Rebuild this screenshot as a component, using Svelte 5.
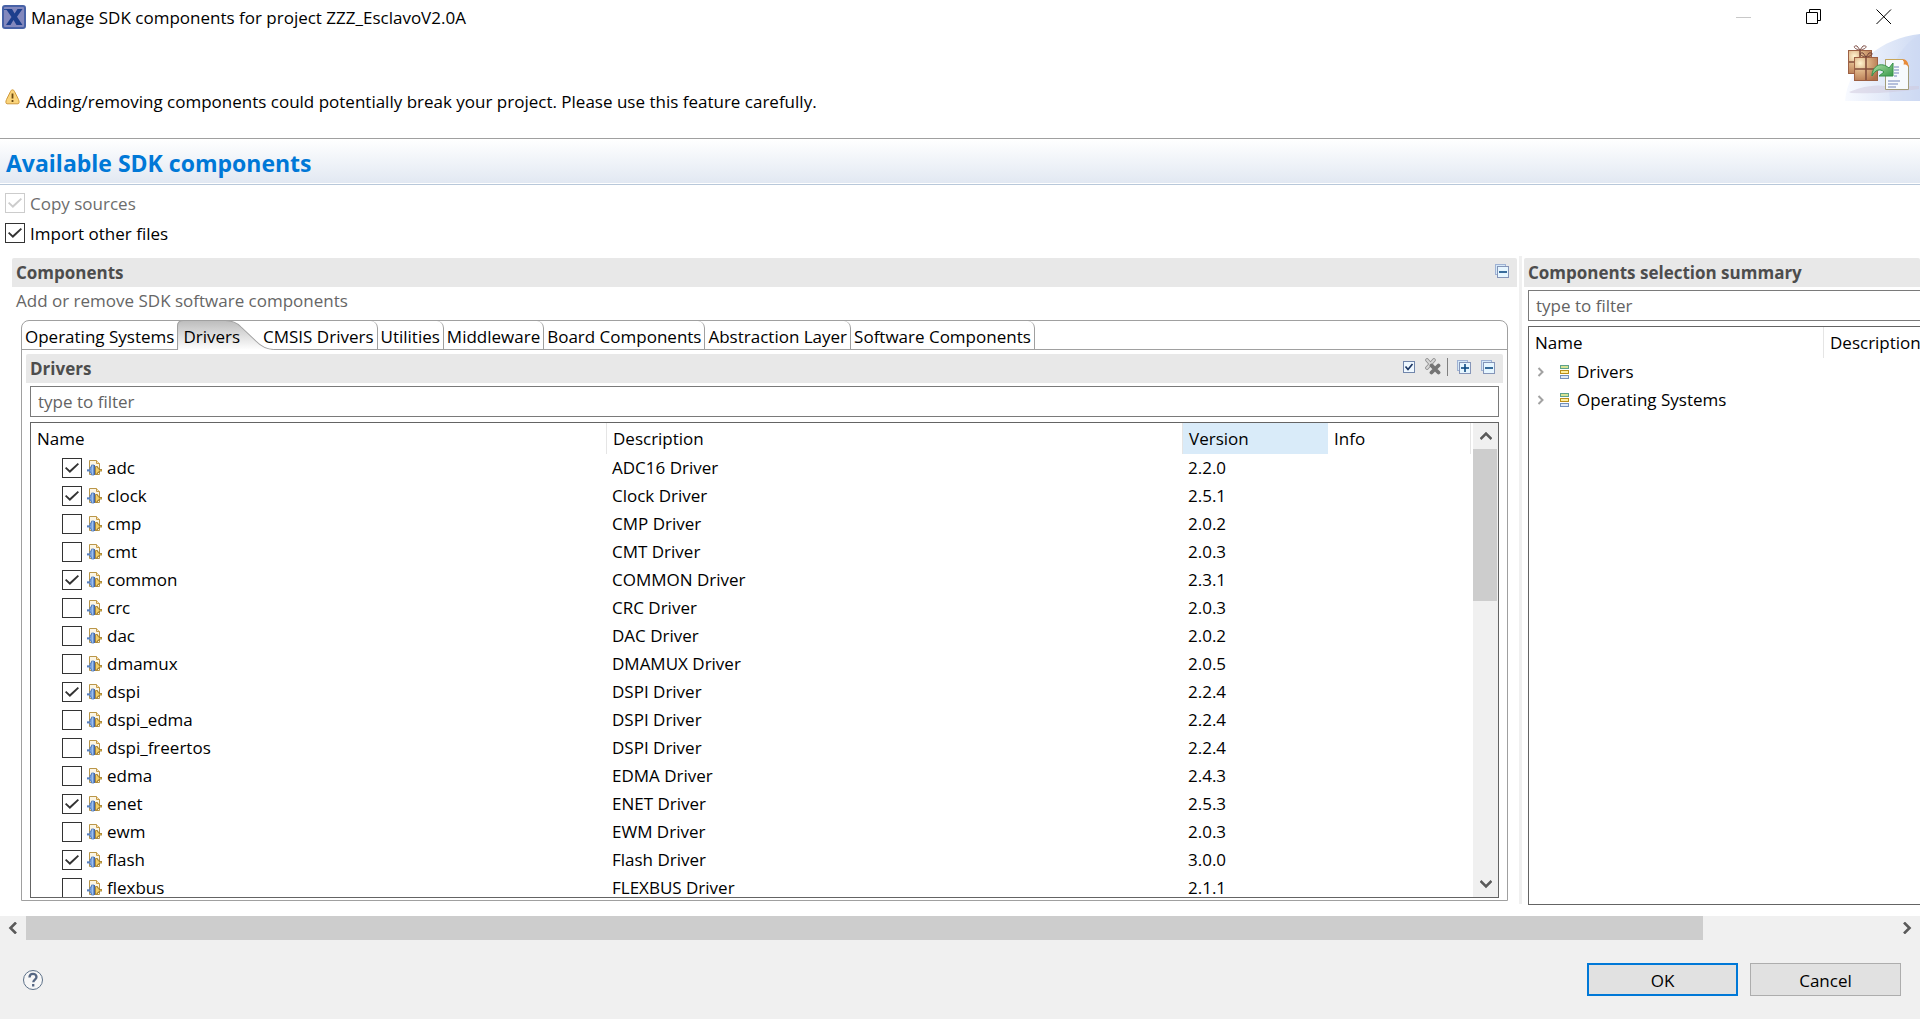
<script>
  const tabs = [
    'Operating Systems',
    'Drivers',
    'CMSIS Drivers',
    'Utilities',
    'Middleware',
    'Board Components',
    'Abstraction Layer',
    'Software Components'
  ];
  let active = $state('Drivers');

  let drivers = $state([
    { name: 'adc', description: 'ADC16 Driver', version: '2.2.0', checked: true },
    { name: 'clock', description: 'Clock Driver', version: '2.5.1', checked: true },
    { name: 'cmp', description: 'CMP Driver', version: '2.0.2', checked: false },
    { name: 'cmt', description: 'CMT Driver', version: '2.0.3', checked: false },
    { name: 'common', description: 'COMMON Driver', version: '2.3.1', checked: true },
    { name: 'crc', description: 'CRC Driver', version: '2.0.3', checked: false },
    { name: 'dac', description: 'DAC Driver', version: '2.0.2', checked: false },
    { name: 'dmamux', description: 'DMAMUX Driver', version: '2.0.5', checked: false },
    { name: 'dspi', description: 'DSPI Driver', version: '2.2.4', checked: true },
    { name: 'dspi_edma', description: 'DSPI Driver', version: '2.2.4', checked: false },
    { name: 'dspi_freertos', description: 'DSPI Driver', version: '2.2.4', checked: false },
    { name: 'edma', description: 'EDMA Driver', version: '2.4.3', checked: false },
    { name: 'enet', description: 'ENET Driver', version: '2.5.3', checked: true },
    { name: 'ewm', description: 'EWM Driver', version: '2.0.3', checked: false },
    { name: 'flash', description: 'Flash Driver', version: '3.0.0', checked: true },
    { name: 'flexbus', description: 'FLEXBUS Driver', version: '2.1.1', checked: false }
  ]);

  const summary = ['Drivers', 'Operating Systems'];
</script>

{#snippet foldIcon(plus)}
  <svg width="14" height="14" viewBox="0 0 14 14" aria-hidden="true">
    <rect x="0.5" y="0.5" width="10" height="10" fill="#d5e9f8" stroke="#9fb2d4" />
    <rect x="2.5" y="2.5" width="11" height="11" fill="#e6f6ff" stroke="#8595b8" />
    <path d="M4 8h8" stroke="#0c4a82" stroke-width="1.6" />
    {#if plus}<path d="M8 4v8" stroke="#0c4a82" stroke-width="1.6" />{/if}
  </svg>
{/snippet}

{#snippet chevron(dir)}
  <svg class={dir} width="12" height="12" viewBox="0 0 12 12" aria-hidden="true">
    <path d="M3 0.5 8.5 6 3 11.5" fill="none" stroke="#5a5a5a" stroke-width="2.6" />
  </svg>
{/snippet}

<div class="dialog">
  <header class="titlebar">
    <svg width="24" height="24" viewBox="0 0 24 24" aria-hidden="true">
      <rect x="1" y="1" width="22" height="22" rx="2" fill="#8388bd" stroke="#4761a6" stroke-width="2" />
      <path d="M2 4.5h5" stroke="#27509a" />
      <path d="M4 4h6l2.600 4.500L15.500 4h5l-5.500 7.800L20.500 20h-6l-3-5-3 5H4l5.500-8z" fill="#1d3f8d" />
    </svg>
    <h1>Manage SDK components for project ZZZ_EsclavoV2.0A</h1>
    <div class="window-buttons">
      <button aria-label="Minimize" disabled>
        <svg width="16" height="16" viewBox="0 0 16 16"><path d="M0 8.500h15" stroke="#c8c8c8" /></svg>
      </button>
      <button aria-label="Restore">
        <svg width="16" height="16" viewBox="0 0 16 16"><path d="M3.500 3.500v-3h11v11h-3M0.500 3.500h11v11h-11z" fill="none" stroke="#000" /></svg>
      </button>
      <button aria-label="Close">
        <svg width="16" height="16" viewBox="0 0 16 16"><path d="M0.500 0.500l14.500 14.500M15 0.500L0.500 15" stroke="#000" /></svg>
      </button>
    </div>
  </header>

  <section class="message">
    <svg class="warning" width="15" height="16" viewBox="0 0 15 16" aria-hidden="true">
      <path d="M7.500 0.800c1 0 1.500 0.700 2 1.700l4 8c0.800 2 1 4-0.500 4.300H2C0.500 14.500 0.700 12.500 1.500 10.500l4-8c0.500-1 1-1.700 2-1.700z" fill="#fad47a" stroke="#d09a3c" />
      <path d="M7.500 4.500v5M7.500 11v2" stroke="#6b4a12" stroke-width="1.800" />
    </svg>
    <p>Adding/removing components could potentially break your project. Please use this feature carefully.</p>
    <svg class="banner" width="76" height="67" viewBox="0 0 76 67" aria-hidden="true">
      <defs>
        <linearGradient id="sky" x1="0" x2="1"><stop offset="0" stop-color="#f8faff" /><stop offset="1" stop-color="#cfdbf3" /></linearGradient>
        <radialGradient id="box" cx="0.25" cy="0.250" r="0.900"><stop offset="0" stop-color="#fff4d0" /><stop offset="0.400" stop-color="#dcb184" /><stop offset="1" stop-color="#b06f48" /></radialGradient>
        <linearGradient id="leaf" x1="0" y1="0" x2="1" y2="1"><stop offset="0" stop-color="#b7e3ae" /><stop offset="1" stop-color="#379a48" /></linearGradient>
      </defs>
      <path d="M1 67C4 30 38 4 76 0v67z" fill="url(#sky)" />
      <path d="M46 67C42 35 56 12 76 0v67z" fill="#cbd8f3" opacity="0.400" />
      <path d="M5 58q20-8 36-6l34 0v3q-30 5-68 4z" fill="#cfc8dc" opacity="0.500" />
      <path d="M16 16c-7-1-7-5-3-4l3 4 3-4c5-1 4 3-3 4" fill="none" stroke="#805048" />
      <rect x="4.500" y="16.500" width="23" height="23" fill="url(#box)" stroke="#9d6144" />
      <path d="M16 16v23M5 28h23" stroke="#834e3c" stroke-width="1.600" />
      <path d="M22 23c-7-1-7-5-3-4l3 4 3-4c5-1 4 3-3 4" fill="none" stroke="#704038" />
      <rect x="10.500" y="23.500" width="23" height="23" fill="url(#box)" stroke="#9d6144" />
      <path d="M22 23v23M11 35h23" stroke="#834e3c" stroke-width="1.600" />
      <path d="M41.500 25.500h17l6 6v24h-23z" fill="#f7fafd" stroke="#a29c79" />
      <path d="M41.500 25.500h17" stroke="#c9a658" />
      <path d="M58 25c4 0 7 3 6.500 9-1-3-2-3.500-5-3.500 1-2 0-4-1.500-5.500z" fill="#e88b3a" />
      <path d="M50 33h5M50 36h5M50 39h5M50 42h3M44 47h12M44 50h10M44 53h8" stroke="#b4bfdc" stroke-width="2" />
      <path d="M28 42c0-10 9-15 17-8l4-5v13H35l5-4c-4-4-9-2-12 4z" fill="url(#leaf)" stroke="#36914a" />
    </svg>
  </section>

  <h2>Available SDK components</h2>

  <main>
    <div class="options">
      <label class="disabled"><input type="checkbox" checked disabled /><span>Copy sources</span></label>
      <label><input type="checkbox" checked /><span>Import other files</span></label>
    </div>

    <div class="panes">
      <section class="components">
        <header class="section-head">
          <h3>Components</h3>
          <div class="tools">
            <button aria-label="Collapse section">{@render foldIcon(false)}</button>
          </div>
        </header>
        <p class="hint">Add or remove SDK software components</p>

        <div class="folder">
          <div class="tabs" role="tablist">
            {#each tabs as tab}
              <button
                role="tab"
                class:active={tab === active}
                aria-selected={tab === active}
                onclick={() => (active = tab)}
              >
                {#if tab === active}
                  <svg class="tab-shape" viewBox="0 0 92 30" preserveAspectRatio="none" aria-hidden="true">
                    <defs>
                      <linearGradient id="tab-fill" x1="0" x2="0" y1="0" y2="1">
                        <stop offset="0" stop-color="#bcbcbc" />
                        <stop offset="1" stop-color="#ffffff" />
                      </linearGradient>
                    </defs>
                    <path d="M0 30V6Q0.500 0.500 6 0.500H46Q55 0.500 61 7L75 21Q83 29 92 29.500V30z" fill="url(#tab-fill)" />
                    <path d="M0.500 30V6Q0.500 0.500 6 0.500H46Q55 0.500 61 7L75 21Q83 29.500 92 29.500" fill="none" stroke="#a0a0a0" />
                  </svg>
                {/if}
                <span>{tab}</span>
              </button>
            {/each}
          </div>

          <div class="folder-body">
            <header class="section-head">
              <h3>Drivers</h3>
              <div class="tools">
                <button aria-label="Select all">
                  <svg width="12" height="12" viewBox="0 0 12 12">
                    <rect x="0.500" y="0.500" width="11" height="11" fill="#eff8ff" stroke="#7186ab" />
                    <path d="M2.500 5.500 5 8.500 9.500 3" fill="none" stroke="#1d3763" stroke-width="1.700" />
                  </svg>
                </button>
                <button aria-label="Deselect all">
                  <svg width="16" height="17" viewBox="0 0 16 17">
                    <path d="M2 2l7 8M9 2l-7 8" stroke="#8d8d8d" stroke-width="3.600" stroke-linecap="round" />
                    <path d="M2 2l7 8M9 2l-7 8" stroke="#d6d6d6" stroke-width="2" stroke-linecap="round" />
                    <path d="M6.500 7.500l7 7M13.500 7.500l-7 7" stroke="#747474" stroke-width="3.800" stroke-linecap="round" />
                  </svg>
                </button>
                <span class="divider"></span>
                <button aria-label="Expand all">{@render foldIcon(true)}</button>
                <button aria-label="Collapse all">{@render foldIcon(false)}</button>
              </div>
            </header>

            <input class="filter" type="text" placeholder="type to filter" aria-label="Filter drivers" />

            <div class="tree">
              <div class="rows">
                <table>
                  <colgroup>
                    <col /><col /><col class="version" /><col class="info" />
                  </colgroup>
                  <thead>
                    <tr><th>Name</th><th>Description</th><th class="sorted">Version</th><th>Info</th></tr>
                  </thead>
                  <tbody>
                    {#each drivers as driver}
                      <tr>
                        <td>
                          <label class="item">
                            <input type="checkbox" bind:checked={driver.checked} />
                            <svg width="15" height="16" viewBox="0 0 15 16" aria-hidden="true">
                              <path d="M2.500 14.500v-14h7l3 3v11z" fill="#fbf5e4" stroke="#b9964a" />
                              <path d="M9.500 0.500v3h3" fill="#f3e2b8" stroke="#c89a45" />
                              <path d="M0 10h3M0 10h3V7h1.500V5H7v10H4.500v-2H3v-2H0z" fill="#7ea5e0" stroke="#4f78ba" stroke-width="0.800" />
                              <path d="M8.500 6.500h2v1.500h1.500v1.500h3v1.500h-3v1.500h-1.500v1.500h-2z" fill="#f3cf68" stroke="#9b7420" stroke-width="0.800" />
                              <path d="M5.500 5.500v9" stroke="#9dc0ee" />
                              <path d="M7.500 5v10" stroke="#4468a8" />
                            </svg>
                            {driver.name}
                          </label>
                        </td>
                        <td>{driver.description}</td>
                        <td>{driver.version}</td>
                        <td></td>
                      </tr>
                    {/each}
                  </tbody>
                </table>
              </div>
              <div class="vscroll">
                <button aria-label="Scroll up">{@render chevron('up')}</button>
                <div class="track"><div class="thumb"></div></div>
                <button aria-label="Scroll down">{@render chevron('down')}</button>
              </div>
            </div>
          </div>
        </div>
      </section>

      <div class="sash"></div>

      <section class="summary">
        <header class="section-head"><h3>Components selection summary</h3></header>
        <input class="filter" type="text" placeholder="type to filter" aria-label="Filter selection" />
        <div class="tree">
          <table>
            <colgroup><col class="wide" /><col /></colgroup>
            <thead><tr><th>Name</th><th>Description</th></tr></thead>
            <tbody>
              {#each summary as group}
                <tr>
                  <td colspan="2">
                    <div class="group">
                      <button aria-label="Expand {group}">
                        <svg width="8" height="10" viewBox="0 0 8 10"><path d="M1.500 1 5.500 5 1.500 9" fill="none" stroke="#a2a2a2" stroke-width="2" /></svg>
                      </button>
                      <svg width="10" height="14" viewBox="0 0 10 14" aria-hidden="true">
                        <rect x="0.500" y="0.500" width="8" height="3" fill="#d6e493" stroke="#5fa28c" />
                        <rect x="0.500" y="5.500" width="8" height="3" fill="#ffee9c" stroke="#b98e1a" />
                        <rect x="0.500" y="10.500" width="8" height="3" fill="#dfe9f6" stroke="#7391bd" />
                      </svg>
                      {group}
                    </div>
                  </td>
                </tr>
              {/each}
            </tbody>
          </table>
        </div>
      </section>
    </div>
  </main>

  <div class="hscroll">
    <button aria-label="Scroll left">{@render chevron('left')}</button>
    <div class="track"><div class="thumb"></div></div>
    <button aria-label="Scroll right">{@render chevron('right')}</button>
  </div>

  <footer>
    <button class="help" aria-label="Help">
      <svg width="22" height="22" viewBox="0 0 22 22">
        <circle cx="11" cy="11" r="9.500" fill="#f7f7f7" stroke="#5d7189" />
        <path d="M7.500 8.500C7.500 3.500 14.500 4 14.500 8c0 2.500-3.200 2.600-3.200 5.200M11.200 15v2.400" fill="none" stroke="#566783" stroke-width="2.300" />
      </svg>
    </button>
    <button class="action primary">OK</button>
    <button class="action">Cancel</button>
  </footer>
</div>

<style>
  :global(body) {
    margin: 0;
    background: #fff;
  }

  .dialog {
    display: flex;
    flex-direction: column;
    height: 100vh;
    overflow: hidden;
    font: 17px/28px 'Open Sans', 'Segoe UI', sans-serif;
    color: #000;
  }

  h1, h2, h3, p { margin: 0; }
  svg { display: block; flex: none; }
  button, input { font: inherit; color: inherit; }

  button {
    margin: 0;
    padding: 0;
    border: 0;
    background: none;
  }

  .titlebar {
    display: flex;
    align-items: center;
    gap: 5px;
    height: 34px;
    padding: 0 1px 0 2px;
  }

  h1 {
    flex: 1;
    padding-top: 2px;
    font-size: 17px;
    font-weight: 400;
  }

  .window-buttons { display: flex; }

  .window-buttons button {
    display: grid;
    place-items: center;
    width: 70px;
    height: 34px;
  }

  .message {
    display: flex;
    height: 104px;
    padding-left: 5px;
    border-bottom: 1px solid #a0a0a0;
  }

  .warning { margin-top: 55px; }

  .message p {
    flex: 1;
    margin: 54px 0 0 6px;
  }

  h2 {
    height: 45px;
    padding-left: 6px;
    border-bottom: 1px solid #b8c8da;
    background: linear-gradient(#fff, #e1e8f2);
    box-shadow: inset 0 -1px #fff;
    font-size: 23px;
    line-height: 48px;
    color: #0078d7;
  }

  main {
    display: flex;
    flex-direction: column;
    flex: 1;
    min-height: 0;
  }

  .options {
    display: flex;
    flex-direction: column;
    padding: 3px 5px 10px;
  }

  label {
    display: flex;
    align-items: center;
    gap: 5px;
  }

  .options span { padding-top: 2px; }

  .disabled { color: #6d6d6d; }

  input[type='checkbox'] {
    display: grid;
    place-items: center;
    flex: none;
    appearance: none;
    width: 20px;
    height: 20px;
    margin: 0;
    border: 1px solid #333;
    background: #fff;
  }

  input[type='checkbox']:checked::before {
    content: '';
    width: 14px;
    height: 10px;
    background: #333;
    clip-path: polygon(0 52%, 9% 40%, 34% 72%, 91% 0, 100% 12%, 35% 100%);
  }

  input[type='checkbox']:disabled { border-color: #ccc; }
  input[type='checkbox']:disabled::before { background: #ccc; }

  .panes {
    display: flex;
    flex: 1;
    min-height: 0;
    padding: 0 0 11px 12px;
  }

  .components {
    display: flex;
    flex-direction: column;
    flex: 1;
    min-width: 0;
  }

  .section-head {
    display: flex;
    flex: none;
    align-items: center;
    justify-content: space-between;
    height: 29px;
    padding: 0 8px 0 4px;
    border-radius: 2px 2px 0 0;
    background: #e8e8e8;
  }

  h3 {
    font-size: 17px;
    font-weight: 700;
    color: #4d4d4d;
  }

  .tools {
    display: flex;
    align-items: center;
    gap: 10px;
    padding-bottom: 4px;
  }

  .divider {
    width: 1px;
    height: 18px;
    margin: 0 -1px 0 -4px;
    background: #808080;
  }

  .hint {
    padding-left: 4px;
    color: #666;
  }

  .folder {
    display: flex;
    flex-direction: column;
    flex: 1;
    min-height: 0;
    margin: 5px 9px 4px;
    border: 1px solid #a0a0a0;
    border-radius: 8px 8px 0 0;
  }

  .tabs {
    display: flex;
    flex: none;
    height: 28px;
    border-bottom: 1px solid #a0a0a0;
  }

  .tabs button {
    position: relative;
    height: 28px;
    padding: 2px 3px 0;
    border-right: 1px solid #a0a0a0;
    border-radius: 0 7px 0 0;
    white-space: nowrap;
  }

  .tabs button:has(+ .active) {
    border-right-color: transparent;
  }

  .tabs .active {
    height: 29px;
    padding-right: 23px;
    padding-left: 5px;
    border-right: 0;
    background: #fff;
  }

  .tabs .active span { position: relative; }

  .tab-shape {
    position: absolute;
    top: -1px;
    left: -1px;
    width: calc(100% + 12px);
    height: 30px;
  }

  .tabs .active + button {
    z-index: 1;
    padding-left: 0;
  }

  .folder-body {
    display: flex;
    flex-direction: column;
    flex: 1;
    min-height: 0;
    padding: 4px 4px 2px;
  }

  .filter {
    box-sizing: border-box;
    height: 31px;
    flex: none;
    margin: 3px 4px 5px;
    padding: 0 7px;
    border: 1px solid #7a7a7a;
    border-radius: 0;
    background: #fff;
    outline: 0;
  }

  .filter::placeholder { color: #636363; opacity: 1; }

  .tree {
    display: flex;
    flex: 1;
    min-height: 0;
    margin: 0 4px;
    border: 1px solid #646464;
    overflow: hidden;
  }

  .rows {
    flex: 1;
    min-width: 0;
    padding-right: 2px;
    overflow: hidden;
  }

  table {
    align-self: flex-start;
    width: 100%;
    table-layout: fixed;
    border-collapse: separate;
    border-spacing: 0;
  }

  col.version { width: 145px; }
  col.info { width: 143px; }
  col.wide { width: 295px; }

  th {
    height: 31px;
    padding: 0 0 0 6px;
    border-right: 1px solid #e5e5e5;
    font-weight: 400;
    text-align: left;
    box-sizing: border-box;
  }

  th.sorted { background: #d9ebf9; border-color: #d9ebf9; }

  td {
    height: 28px;
    padding: 0 0 0 5px;
    white-space: nowrap;
  }

  td .item {
    padding-left: 26px;
  }

  .vscroll {
    display: flex;
    flex-direction: column;
    width: 25px;
    background: #f0f0f0;
  }

  .vscroll button {
    display: grid;
    place-items: center;
    height: 26px;
  }

  .track { flex: 1; }
  .thumb { background: #cdcdcd; }

  .vscroll .thumb {
    width: 24px;
    height: 36%;
  }

  .up { transform: rotate(-90deg); }
  .down { transform: rotate(90deg); }
  .left { transform: rotate(180deg); }

  .sash {
    width: 3px;
    margin: -2px 2px 1px;
    background: #f0f0f0;
  }

  .summary {
    display: flex;
    flex-direction: column;
    width: 396px;
    overflow: hidden;
  }

  .summary .filter, .summary .tree {
    margin-right: 0;
    border-right: 0;
  }

  .summary th:last-child { border-right: 0; }

  .group {
    display: flex;
    align-items: center;
    gap: 7px;
    padding-left: 3px;
  }

  .group button { margin-right: 8px; }

  .hscroll {
    display: flex;
    flex: none;
    height: 24px;
    background: #f0f0f0;
  }

  .hscroll button {
    display: grid;
    place-items: center;
    width: 26px;
  }

  .hscroll .thumb {
    width: 89.8%;
    height: 24px;
  }

  footer {
    display: flex;
    flex: none;
    align-items: center;
    gap: 12px;
    height: 79px;
    padding: 0 19px 0 22px;
    background: #f0f0f0;
  }

  .help { margin-right: auto; }

  .action {
    box-sizing: border-box;
    width: 151px;
    height: 33px;
    padding-top: 2px;
    border: 1px solid #adadad;
    background: #e1e1e1;
    line-height: 26px;
  }

  .primary { border: 2px solid #0078d7; }
</style>
